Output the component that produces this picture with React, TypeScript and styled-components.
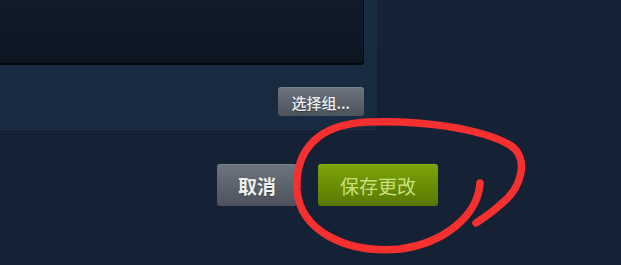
import styled, { createGlobalStyle } from 'styled-components'

const GlobalStyle = createGlobalStyle`
    html, body {
        margin: 0;
        padding: 0;
        background: #152135;
    }
    body {
        font-family: "Noto Sans CJK SC", "Noto Sans", sans-serif;
    }
`

const Page = styled.div`
    position: relative;
    width: 621px;
    height: 265px;
    overflow: hidden;
    background: #152135;
`

const GroupSection = styled.div`
    width: 377px;
    height: 130px;
    box-sizing: border-box;
    background: linear-gradient(180deg, #1a2c42 0%, #182a3f 100%);
    border-bottom: 1px solid #1d3049;
    display: flex;
    flex-direction: column;
`

const ListPanel = styled.div`
    width: 364px;
    height: 65px;
    box-sizing: border-box;
    background: linear-gradient(180deg, #111b2a 0%, #0d1522 100%);
    border-right: 1px solid #04070c;
    border-bottom: 2px solid #04070c;
    border-bottom-right-radius: 3px;
`

const PickRow = styled.div`
    width: 364px;
    display: flex;
    justify-content: flex-end;
    margin-top: 22px;
`

const GrayButton = styled.button<{ $big?: boolean }>`
    box-sizing: border-box;
    height: ${p => (p.$big ? '42px' : '29px')};
    padding: 0 ${p => (p.$big ? '21px' : '14px')};
    border: none;
    border-top: 1px solid #7a828c;
    border-radius: 3px;
    background: linear-gradient(180deg, #6c747e 0%, #4b525b 100%);
    color: #eef0f2;
    font-family: "Noto Sans CJK SC", sans-serif;
    font-size: ${p => (p.$big ? '19px' : '15px')};
    font-weight: ${p => (p.$big ? 700 : 500)};
    text-shadow: 0 1px 1px rgba(0, 0, 0, 0.35);
    cursor: pointer;
`

const ActionRow = styled.div`
    display: flex;
    justify-content: flex-end;
    gap: 21px;
    margin-top: 34px;
    padding-right: 183px;
`

const SaveButton = styled.button`
    box-sizing: border-box;
    width: 120px;
    height: 42px;
    border: none;
    border-top: 1px solid #8cb21a;
    border-radius: 3px;
    background: linear-gradient(180deg, #7ca40a 0%, #577701 100%);
    color: #c6e07e;
    font-family: "Noto Sans CJK SC", sans-serif;
    font-size: 19px;
    cursor: pointer;
`

const Scribble = styled.svg`
    position: absolute;
    left: 0;
    top: 0;
    pointer-events: none;
`

export default function App() {
    return (
        <Page>
            <GlobalStyle />
            <GroupSection>
                <ListPanel />
                <PickRow>
                    <GrayButton>选择组...</GrayButton>
                </PickRow>
            </GroupSection>

            <ActionRow>
                <GrayButton $big>取消</GrayButton>
                <SaveButton>保存更改</SaveButton>
            </ActionRow>

            {/* red hand-drawn circle */}
            <Scribble width="621" height="265" viewBox="0 0 621 265">
                <path
                    d="M480,183 C478,215 445,243 400,249 C345,254 300,230 297,190 C295,150 318,124 368,122 C420,120 480,128 510,145 C530,158 522,188 500,205 C490,214 482,219 476,223"
                    fill="none"
                    stroke="#f5302f"
                    strokeWidth="7.5"
                    strokeLinecap="round"
                    strokeLinejoin="round"
                />
            </Scribble>
        </Page>
    )
}
